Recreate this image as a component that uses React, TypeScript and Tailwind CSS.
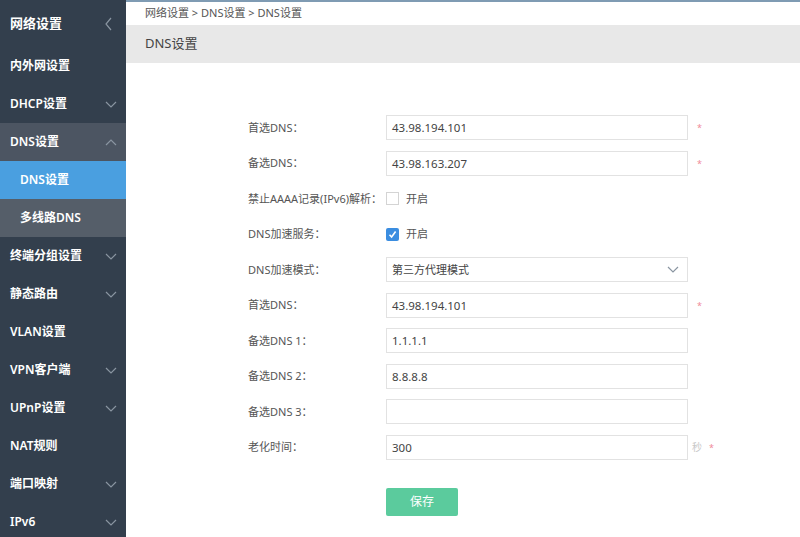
import React from 'react';

const Chevron = ({ dir }: { dir: 'down' | 'up' | 'left' }) => {
  const d =
    dir === 'down' ? 'M1 1 L6 6 L11 1' : dir === 'up' ? 'M1 6 L6 1 L11 6' : 'M6 1 L1 7 L6 13';
  return dir === 'left' ? (
    <svg width="7" height="14" viewBox="0 0 7 14" fill="none" stroke="#8a95a1" strokeWidth="1.2">
      <path d={d} />
    </svg>
  ) : (
    <svg width="12" height="7" viewBox="0 0 12 7" fill="none" stroke="#8a95a1" strokeWidth="1.2">
      <path d={d} />
    </svg>
  );
};

type NavItem = { label: string; arrow?: 'down' | 'up'; open?: boolean };

const navItems: NavItem[] = [
  { label: '内外网设置' },
  { label: 'DHCP设置', arrow: 'down' },
  { label: 'DNS设置', arrow: 'up', open: true },
];

const navRest: NavItem[] = [
  { label: '终端分组设置', arrow: 'down' },
  { label: '静态路由', arrow: 'down' },
  { label: 'VLAN设置' },
  { label: 'VPN客户端', arrow: 'down' },
  { label: 'UPnP设置', arrow: 'down' },
  { label: 'NAT规则' },
  { label: '端口映射', arrow: 'down' },
  { label: 'IPv6', arrow: 'down' },
];

const NavRow = ({ item }: { item: NavItem }) => (
  <div
    className={`h-[38px] shrink-0 flex items-center justify-between pl-[10px] pr-[9px] text-[12px] font-semibold text-white ${
      item.open ? 'bg-[#4c5562]' : ''
    }`}
  >
    <span>{item.label}</span>
    {item.arrow && <Chevron dir={item.arrow} />}
  </div>
);

const Field = ({
  label,
  children,
}: {
  label: string;
  children: React.ReactNode;
}) => (
  <div className="h-[35.5px] flex items-center">
    <div className="w-[138px] text-[11px] text-[#555]">{label}</div>
    <div className="flex items-center">{children}</div>
  </div>
);

const Input = ({ value }: { value: string }) => (
  <div className="w-[302px] h-[25px] border border-[#e2e2e2] bg-white flex items-center px-[5px] text-[11.5px] text-[#444]">
    {value}
  </div>
);

const Star = () => <span className="ml-[9px] text-[9px] text-[#f08a9a]">*</span>;

export default function App() {
  return (
    <div
      className="w-[800px] h-[537px] flex overflow-hidden bg-white"
      style={{ fontFamily: '"Noto Sans", "Noto Sans CJK SC", sans-serif' }}
    >
      {/* Sidebar */}
      <div className="w-[126px] shrink-0 bg-[#333f4d] flex flex-col">
        <div className="h-[47px] shrink-0 flex items-center justify-between pl-[10px] pr-[14px] text-[13px] font-semibold text-white">
          <span>网络设置</span>
          <Chevron dir="left" />
        </div>
        {navItems.map((it) => (
          <NavRow key={it.label} item={it} />
        ))}
        <div className="h-[38px] shrink-0 flex items-center pl-[20px] bg-[#4a9fe0] text-[12px] font-semibold text-white">
          DNS设置
        </div>
        <div className="h-[38px] shrink-0 flex items-center pl-[20px] bg-[#555e69] text-[12px] font-semibold text-white">
          多线路DNS
        </div>
        {navRest.map((it) => (
          <NavRow key={it.label} item={it} />
        ))}
      </div>

      {/* Main */}
      <div className="flex-1 flex flex-col border-t-2 border-[#7f9bb3]">
        <div className="h-[23px] flex items-center pl-[19px] text-[11px] text-[#555]">
          网络设置 &gt; DNS设置 &gt; DNS设置
        </div>
        <div className="h-[38px] flex items-center pl-[19px] bg-[#e8e8e8] text-[13px] text-[#444]">
          DNS设置
        </div>

        <div className="pl-[122px] pt-[47px] flex flex-col">
          <Field label="首选DNS：">
            <Input value="43.98.194.101" />
            <Star />
          </Field>
          <Field label="备选DNS：">
            <Input value="43.98.163.207" />
            <Star />
          </Field>
          <Field label="禁止AAAA记录(IPv6)解析：">
            <div className="w-[13px] h-[13px] border border-[#d4d4d4] bg-white" />
            <span className="ml-[7px] text-[11px] text-[#555]">开启</span>
          </Field>
          <Field label="DNS加速服务：">
            <div className="w-[13px] h-[13px] rounded-[2px] bg-[#3b8de0] flex items-center justify-center">
              <svg width="9" height="9" viewBox="0 0 9 9" fill="none" stroke="white" strokeWidth="1.6">
                <path d="M1.5 4.8 L3.6 7 L7.6 1.6" />
              </svg>
            </div>
            <span className="ml-[7px] text-[11px] text-[#555]">开启</span>
          </Field>
          <Field label="DNS加速模式：">
            <div className="w-[302px] h-[25px] border border-[#e2e2e2] bg-white flex items-center justify-between pl-[5px] pr-[8px] text-[11px] text-[#444]">
              <span>第三方代理模式</span>
              <Chevron dir="down" />
            </div>
          </Field>
          <Field label="首选DNS：">
            <Input value="43.98.194.101" />
            <Star />
          </Field>
          <Field label="备选DNS 1：">
            <Input value="1.1.1.1" />
          </Field>
          <Field label="备选DNS 2：">
            <Input value="8.8.8.8" />
          </Field>
          <Field label="备选DNS 3：">
            <Input value="" />
          </Field>
          <Field label="老化时间：">
            <Input value="300" />
            <span className="ml-[4px] text-[10px] text-[#c8c8c8]">秒</span>
            <span className="ml-[7px] text-[9px] text-[#f08a9a]">*</span>
          </Field>

          <div className="pl-[138px] mt-[23px]">
            <button className="w-[72px] h-[28px] rounded-[2px] bg-[#5bcb9d] text-white text-[12px]">
              保存
            </button>
          </div>
        </div>
      </div>
    </div>
  );
}
